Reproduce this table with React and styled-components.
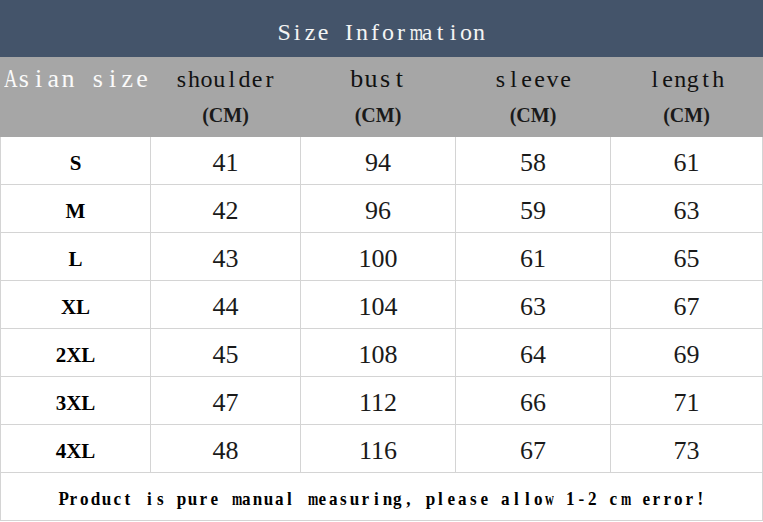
import React from "react";
import styled, { createGlobalStyle } from "styled-components";

const GlobalStyle = createGlobalStyle`
  html, body {
    margin: 0;
    padding: 0;
    background: #fff;
  }
  * {
    box-sizing: border-box;
  }
`;

const columns = "149px 149px 154px 154px 151px";
const lineColor = "#d4d4d4";

const Wrapper = styled.section`
  width: 763px;
  height: 522px;
  overflow: hidden;
  background: #fff;
`;

// fixed-pitch serif text, like the SimSun latin glyphs of the original chart
const Glyph = styled.span`
  display: inline-block;
  width: ${(p) => p.$pitch}px;
  text-align: center;
  transform: scaleX(${(p) => p.$squeeze});
`;

const wide = "mwMWA";

const Mono = ({ text, pitch, squeeze = 1 }) => (
  <span>
    {text.split("").map((c, i) => (
      <Glyph
        key={i}
        $pitch={pitch}
        $squeeze={wide.includes(c) ? squeeze * 0.72 : squeeze}
      >
        {c === " " ? "\u00a0" : c}
      </Glyph>
    ))}
  </span>
);

const TitleBar = styled.div`
  height: 57px;
  background: #44546a;
  color: #f4f4f4;
  display: flex;
  align-items: center;
  justify-content: center;
  font-family: "Liberation Serif", serif;
  font-size: 24px;
  padding-top: 7px;
`;

const HeaderRow = styled.div`
  height: 80px;
  background: #a6a6a6;
  display: grid;
  grid-template-columns: ${columns};
  column-gap: 1px;
  padding: 0 1px;
`;

const HeadCell = styled.div`
  display: flex;
  flex-direction: column;
  align-items: center;
  padding-top: 6px;
  color: ${(p) => (p.$light ? "#fafafa" : "#111")};
  font-family: "Liberation Serif", serif;
  font-size: ${(p) => p.$size || 24}px;
  line-height: 32px;
  white-space: nowrap;
`;

const Unit = styled.span`
  margin-top: 5px;
  font-family: "Liberation Serif", serif;
  font-weight: bold;
  font-size: 20px;
  line-height: 30px;
  color: #1a1a1a;
`;

const Body = styled.div`
  display: grid;
  grid-template-columns: ${columns};
  grid-auto-rows: 47px;
  gap: 1px;
  padding: 0 1px 1px;
  background: ${lineColor};
`;

const Cell = styled.div`
  background: #fff;
  display: flex;
  align-items: center;
  justify-content: center;
  font-family: "Liberation Serif", serif;
  font-size: ${(p) => (p.$label ? 21 : 26)}px;
  font-weight: ${(p) => (p.$label ? "bold" : "normal")};
  color: ${(p) => (p.$label ? "#000" : "#1a1a1a")};
  padding-top: 5px;
`;

const Footer = styled.div`
  grid-column: 1 / -1;
  background: #fff;
  display: flex;
  align-items: center;
  justify-content: center;
  font-family: "Liberation Serif", serif;
  font-weight: bold;
  font-size: 19px;
  color: #000;
  padding-top: 5px;
`;

const headers = [
  { name: "shoulder", size: 24, pitch: 12.6 },
  { name: "bust", size: 26, pitch: 14.2 },
  { name: "sleeve", size: 24, pitch: 13 },
  { name: "length", size: 24, pitch: 12.7 },
];

const rows = [
  ["S", 41, 94, 58, 61],
  ["M", 42, 96, 59, 63],
  ["L", 43, 100, 61, 65],
  ["XL", 44, 104, 63, 67],
  ["2XL", 45, 108, 64, 69],
  ["3XL", 47, 112, 66, 71],
  ["4XL", 48, 116, 67, 73],
];

export default function App() {
  return (
    <Wrapper>
      <GlobalStyle />
      <TitleBar>
        <Mono text="Size Information" pitch={13} />
      </TitleBar>
      <HeaderRow>
        <HeadCell $light $size={26}>
          <Mono text="Asian size" pitch={14.8} />
        </HeadCell>
        {headers.map((h) => (
          <HeadCell key={h.name} $size={h.size}>
            <Mono text={h.name} pitch={h.pitch} />
            <Unit>(CM)</Unit>
          </HeadCell>
        ))}
      </HeaderRow>
      <Body>
        {rows.map((row) =>
          row.map((v, i) => (
            <Cell key={row[0] + i} $label={i === 0}>
              {v}
            </Cell>
          ))
        )}
        <Footer>
          <Mono
            text="Product is pure manual measuring, please allow 1-2 cm error!"
            pitch={10.8}
            squeeze={0.9}
          />
        </Footer>
      </Body>
    </Wrapper>
  );
}
